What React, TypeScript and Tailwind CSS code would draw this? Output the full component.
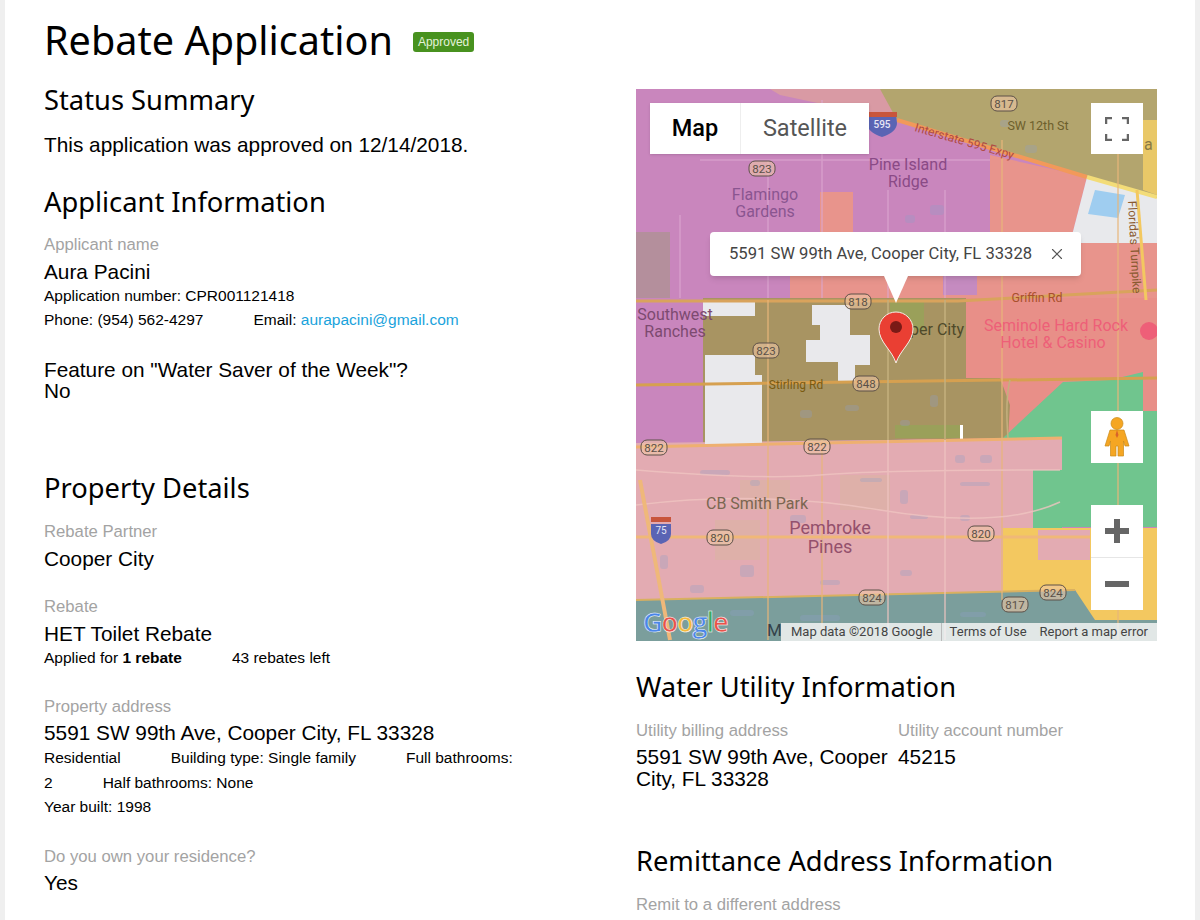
import type { ReactNode } from 'react';
import { X } from 'lucide-react';

const shields: [number, number, string][] = [
  [1004, 103, '817'],
  [762, 168, '823'],
  [858, 301, '818'],
  [766, 350, '823'],
  [866, 383, '848'],
  [654, 447, '822'],
  [817, 446, '822'],
  [720, 537, '820'],
  [981, 533, '820'],
  [872, 597, '824'],
  [1053, 592, '824'],
  [1015, 604, '817'],
];

const labels: [number, number, string, number, string][] = [
  [908, 170, 'Pine Island', 16, '#8a4a86'],
  [908, 187, 'Ridge', 16, '#8a4a86'],
  [765, 200, 'Flamingo', 16, '#8a5590'],
  [765, 217, 'Gardens', 16, '#8a5590'],
  [675, 320, 'Southwest', 16, '#7c4a70'],
  [675, 337, 'Ranches', 16, '#7c4a70'],
  [757, 509, 'CB Smith Park', 16, '#7a6650'],
  [830, 534, 'Pembroke', 18, '#94506c'],
  [830, 553, 'Pines', 18, '#94506c'],
  [1037, 302, 'Griffin Rd', 12.5, '#a8502c'],
  [1038, 130, 'SW 12th St', 12.5, '#6d5f2c'],
  [796, 389, 'Stirling Rd', 12, '#7a5a10'],
  [1056, 331, 'Seminole Hard Rock', 16, '#ee5f78'],
  [1053, 348, 'Hotel & Casino', 16, '#ee5f78'],
  [937, 335, 'per City', 16, '#4f4a2a'],
];

const ponds: [number, number, number, number][] = [
  [930, 205, 14, 10], [845, 270, 18, 6], [905, 215, 10, 8], [1000, 120, 10, 7], [1025, 145, 12, 8],
  [800, 410, 12, 8], [845, 405, 14, 6], [900, 420, 10, 6], [930, 395, 8, 12],
  [700, 470, 30, 5], [750, 480, 10, 6], [860, 478, 22, 4], [955, 455, 10, 8], [980, 455, 12, 8],
  [900, 490, 8, 14], [960, 482, 30, 4], [910, 515, 18, 4], [960, 515, 10, 6], [790, 515, 16, 8],
  [740, 565, 14, 12], [820, 580, 20, 5], [900, 570, 12, 6], [690, 585, 14, 8], [660, 555, 8, 14],
  [730, 610, 24, 6], [800, 615, 40, 6], [960, 612, 26, 5],
];

function MapArt() {
  return (
    <svg viewBox="636 89 521 552" className="block h-full w-full">
      <rect x="636" y="89" width="521" height="552" fill="#c986bd" />
      <path d="M770 89H900L897 120L780 95Z" fill="#d99aa4" />
      <path d="M880 89H1157V200L1087 177L897 120Z" fill="#b3a56e" />
      <path d="M990 155L1087 177L1070 243H1157V298H790V232H853V192H820V232H990Z" fill="#e8948c" />
      <path d="M1087 177L1157 198V243H1070Z" fill="#e8e9ec" />
      <path d="M1095 190L1125 195L1118 218L1088 214Z" fill="#9fcdf0" />
      <path d="M1143 120H1157V195L1143 190Z" fill="#e9c868" />
      <rect x="943" y="275" width="34" height="20" fill="#c58bc0" />
      <rect x="636" y="232" width="34" height="66" fill="#b48f9c" />
      <rect x="958" y="298" width="199" height="142" fill="#e88f88" />
      <path d="M703 298H966V378H1000L1010 405L1008 438L703 443Z" fill="#a89462" />
      <path d="M895 425H960V438H895Z" fill="#9aa05a" />
      <rect x="890" y="300" width="34" height="30" fill="#9aa05a" />
      <path d="M1003 438L1063 382L1110 380L1143 372V411H1157V527H1033V470H1062V438Z" fill="#70c58e" />
      <path d="M636 443L1062 438V590L636 600Z" fill="#e3abb2" />
      <path d="M1033 470H1062V530H1033Z" fill="#70c58e" />
      <path d="M1003 528H1157V620H1090L1075 590L1003 593Z" fill="#f3c860" />
      <path d="M1038 530H1090V560H1038Z" fill="#e3abb2" />
      <path d="M636 600L1075 590L1095 620H1157V641H636Z" fill="#7b9e9c" />
      <path d="M740 480H790V510H740ZM840 475H890V510H840ZM715 520H760V560H715Z" fill="#d8b89a" opacity="0.4" />
      <path d="M705 355H755V375H762V445H705Z" fill="#e9e9ec" />
      <rect x="703" y="302" width="52" height="14" fill="#e9e9ec" />
      <path d="M812 305H850V335H870V365H855V382H838V362H806V340H820V325H812Z" fill="#e9e9ec" />
      <rect x="960" y="425" width="3" height="14" fill="#ffffff" />
      {ponds.map(([x, y, w, h]) => (
        <rect key={`${x}-${y}`} x={x} y={y} width={w} height={h} rx="3" fill="#8fa0c8" opacity="0.3" />
      ))}
      <path d="M897 120L1087 177" fill="none" stroke="#f2995a" strokeWidth="4" />
      <path d="M1087 177L1157 197" fill="none" stroke="#f3dc78" strokeWidth="4" />
      <path d="M636 301H958L1157 290" fill="none" stroke="#d9a35c" strokeWidth="3" />
      <path d="M636 385L1157 378" fill="none" stroke="#d6a050" strokeWidth="3" />
      <path d="M636 447L1062 438" fill="none" stroke="#eeb070" strokeWidth="3" />
      <path d="M636 537H1090" fill="none" stroke="#f0b878" strokeWidth="3" />
      <path d="M636 600L1075 590" fill="none" stroke="#d9b060" strokeWidth="2" />
      <path d="M768 300V640M1002 140V600M822 440V640M1118 140V640" fill="none" stroke="#e7b679" strokeWidth="2" opacity="0.6" />
      <path d="M768 160V298M822 100V298M888 190V298M945 190V298M700 160H990M680 215V298" fill="none" stroke="#dba6cf" strokeWidth="1.5" opacity="0.7" />
      <path d="M888 300V440M945 300V440M1010 380Q1005 400 1008 438" fill="none" stroke="#c4b07e" strokeWidth="1.5" />
      <path d="M888 440V640M945 440V640M636 470Q760 480 820 475T1060 470M636 505Q760 490 880 510T1060 502" fill="none" stroke="#efc4c0" strokeWidth="1.5" opacity="0.8" />
      <path d="M640 480L670 640" fill="none" stroke="#efb87a" strokeWidth="4" />
      <path d="M1137 190L1146 300" fill="none" stroke="#f3c860" strokeWidth="3" />
      <path d="M867 123Q868 115 870 115H896L897 123Q897 132 882 137Q867 132 867 123Z" fill="#5a64b4" />
      <rect x="868" y="112" width="29" height="5" fill="#c8553c" />
      <text x="882" y="128" textAnchor="middle" fontSize="10" fontWeight="500" fill="#e6e6f5" fontFamily="Roboto, sans-serif">595</text>
      <path d="M651 524H671V534Q671 541 661 544Q651 541 651 534Z" fill="#5a64b4" />
      <rect x="651" y="517" width="20" height="5" fill="#c8553c" />
      <text x="661" y="534" textAnchor="middle" fontSize="10" fill="#e6e6f5" fontFamily="Roboto, sans-serif">75</text>
      {shields.map(([x, y, t]) => (
        <g key={`${x}-${y}`}>
          <rect x={x - 13} y={y - 7} width="26" height="15" rx="6" fill="#efc7a5" fillOpacity="0.6" stroke="#5c5048" strokeWidth="1" />
          <text x={x} y={y + 4.5} textAnchor="middle" fontSize="11.5" fill="#5a5048" fontFamily="Roboto, sans-serif">{t}</text>
        </g>
      ))}
      {labels.map(([x, y, t, s, c]) => (
        <text key={t} x={x} y={y} textAnchor="middle" fontSize={s} fill={c} fontFamily="Roboto, sans-serif">{t}</text>
      ))}
      <text transform="translate(914 131) rotate(16)" fontSize="12" fill="#b04a44" fontFamily="Roboto, sans-serif">Interstate 595 Expy</text>
      <text transform="translate(1128 201) rotate(87)" fontSize="12" fill="#8a5a30" fontFamily="Roboto, sans-serif">Florida's Turnpike</text>
      <text x="1144" y="150" fontSize="16" fill="#8a7a44" fontFamily="Roboto, sans-serif">a</text>
      <circle cx="1149" cy="331" r="9" fill="#ee5f78" />
      <path d="M896 363C892 350 879 342 879 329A17 17 0 0 1 913 329C913 342 900 350 896 363Z" fill="#ea3f33" stroke="#f4f0e8" strokeWidth="1" />
      <circle cx="896" cy="327" r="6" fill="#7a1a16" />
      <text x="643" y="632" fontSize="27" fontWeight="600" fontFamily="'Open Sans', sans-serif" stroke="#ffffff" strokeWidth="0.5">
        <tspan fill="#4a86e8">G</tspan>
        <tspan fill="#e8524a" dx="-1">o</tspan>
        <tspan fill="#f4b93c" dx="-1">o</tspan>
        <tspan fill="#4a86e8" dx="-1">g</tspan>
        <tspan fill="#3fa85a" dx="-1">l</tspan>
        <tspan fill="#e8524a" dx="-1">e</tspan>
      </text>
      <text x="767" y="636" fontSize="17" fill="#33424a" fontFamily="Roboto, sans-serif">M</text>
    </svg>
  );
}

function Pegman() {
  return (
    <svg viewBox="0 0 26 40" className="h-[40px] w-[26px]">
      <circle cx="13" cy="6.5" r="6" fill="#f5a623" stroke="#c98a1a" strokeWidth="0.7" />
      <path d="M6 13H20L25 29H21L19.5 24V39H14V29H12V39H6.5V24L5 29H1Z" fill="#f5a623" stroke="#c98a1a" strokeWidth="0.7" />
      <path d="M13 13L11.5 18L13 21L14.5 18Z" fill="#d8642a" />
    </svg>
  );
}

function GoogleMap() {
  return (
    <div className="relative h-[552px] w-[521px] overflow-hidden font-['Roboto',sans-serif]">
      <MapArt />

      <div className="absolute left-[14px] top-[14px] flex h-[51px] bg-white text-[23.5px] shadow-sm">
        <div className="flex w-[91px] items-center justify-center border-r border-[#eeeeee] font-medium text-black">Map</div>
        <div className="flex w-[128px] items-center justify-center text-[#565656]">Satellite</div>
      </div>

      <div className="absolute right-[14px] top-[14px] flex h-[51px] w-[52px] items-center justify-center bg-white">
        <svg viewBox="0 0 24 24" className="h-[24px] w-[24px]" fill="none" stroke="#666666" strokeWidth="2.5">
          <path d="M1 7V1H7M17 1H23V7M23 17V23H17M7 23H1V17" />
        </svg>
      </div>

      <div className="absolute left-[74px] top-[143px] flex h-[44px] w-[371px] items-center justify-between rounded-sm bg-white pl-[19px] pr-[15px] text-[16.6px] text-[#444444] shadow-md">
        <span>5591 SW 99th Ave, Cooper City, FL 33328</span>
        <X size={18} strokeWidth={1.5} className="text-[#555555]" />
      </div>
      <div className="absolute left-[248px] top-[187px] h-0 w-0 border-x-[12px] border-t-[27px] border-x-transparent border-t-white" />

      <div className="absolute right-[14px] top-[322px] flex h-[52px] w-[52px] items-center justify-center bg-white">
        <Pegman />
      </div>

      <div className="absolute right-[14px] top-[416px] flex h-[105px] w-[52px] flex-col bg-white">
        <div className="flex flex-1 items-center justify-center border-b border-[#e6e6e6]">
          <svg viewBox="0 0 24 24" className="h-[24px] w-[24px]" fill="#666666">
            <path d="M9 0H15V9H24V15H15V24H9V15H0V9H9Z" />
          </svg>
        </div>
        <div className="flex flex-1 items-center justify-center">
          <div className="h-[6px] w-[24px] bg-[#666666]" />
        </div>
      </div>

      <div className="absolute bottom-0 right-0 flex h-[18px] w-[376px] items-center bg-[#f3f3f3]/85 pl-[10px] pr-[9px] text-[13px] text-[#444444]">
        <span>Map data ©2018 Google</span>
        <span className="ml-[8px] h-full border-l border-[#bbbbbb]" />
        <span className="ml-[8px]">Terms of Use</span>
        <span className="ml-auto">Report a map error</span>
      </div>
    </div>
  );
}

function SectionTitle({ children, className }: { children: ReactNode; className: string }) {
  return <h2 className={`font-['Noto_Sans',sans-serif] text-[27.3px] leading-[38px] text-black ${className}`}>{children}</h2>;
}

function Label({ children, className = '' }: { children: ReactNode; className?: string }) {
  return <div className={`text-[16.7px] leading-[20px] text-[#a3a3a3] ${className}`}>{children}</div>;
}

function Value({ children, className = '' }: { children: ReactNode; className?: string }) {
  return <div className={`text-[20.8px] leading-[22px] text-black ${className}`}>{children}</div>;
}

function Small({ children }: { children: ReactNode }) {
  return <div className="whitespace-nowrap text-[15.5px] leading-[24.4px] text-black">{children}</div>;
}

export default function App() {
  return (
    <div className="h-[920px] overflow-hidden bg-[#efefef] px-[5px] font-['Liberation_Sans',Arial,sans-serif]">
      <div className="flex h-full bg-white pl-[39px]">
        <div className="w-[475px] shrink-0">
          <div className="flex items-center pt-[14px]">
            <h1 className="font-['Noto_Sans',sans-serif] text-[39.6px] leading-[52px] text-black">Rebate Application</h1>
            <span className="ml-[20px] mt-[4px] rounded-[3px] bg-[#48921f] px-[5px] text-[12px] leading-[20px] text-[#e4f2da]">Approved</span>
          </div>
          <SectionTitle className="mt-[15px]">Status Summary</SectionTitle>
          <p className="mt-[14px] text-[20.8px] leading-[24px] text-black">This application was approved on 12/14/2018.</p>

          <SectionTitle className="mt-[26px]">Applicant Information</SectionTitle>
          <Label className="mt-[14px]">Applicant name</Label>
          <Value className="mt-[6px]">Aura Pacini</Value>
          <div className="mt-[1px]">
            <Small>Application number: CPR001121418</Small>
            <Small>
              <span className="mr-[50px]">Phone: (954) 562-4297</span>
              Email: <a className="text-[#1aa3dc]">aurapacini@gmail.com</a>
            </Small>
          </div>
          <Value className="mt-[26px]">Feature on "Water Saver of the Week"?</Value>
          <Value className="-mt-px">No</Value>

          <SectionTitle className="mt-[67px]">Property Details</SectionTitle>
          <Label className="mt-[15px]">Rebate Partner</Label>
          <Value className="mt-[6px]">Cooper City</Value>

          <Label className="mt-[27px]">Rebate</Label>
          <Value className="mt-[6px]">HET Toilet Rebate</Value>
          <div className="mt-[1px]">
            <Small>
              <span className="mr-[50px]">Applied for <b>1 rebate</b></span>43 rebates left
            </Small>
          </div>

          <Label className="mt-[27px]">Property address</Label>
          <Value className="mt-[5px]">5591 SW 99th Ave, Cooper City, FL 33328</Value>
          <div className="mt-[2px]">
            <Small>
              <span className="mr-[50px]">Residential</span>
              <span className="mr-[50px]">Building type: Single family</span>
              Full bathrooms:
            </Small>
            <Small>
              <span className="mr-[50px]">2</span>
              Half bathrooms: None
            </Small>
            <Small>Year built: 1998</Small>
          </div>

          <Label className="mt-[28px]">Do you own your residence?</Label>
          <Value className="mt-[5px]">Yes</Value>
        </div>

        <div className="ml-[117px] w-[521px] shrink-0 pt-[89px]">
          <GoogleMap />
          <SectionTitle className="mt-[27px]">Water Utility Information</SectionTitle>
          <div className="mt-[15px] grid grid-cols-[262px_1fr]">
            <div>
              <Label>Utility billing address</Label>
              <Value className="mt-[5px]">5591 SW 99th Ave, Cooper City, FL 33328</Value>
            </div>
            <div>
              <Label>Utility account number</Label>
              <Value className="mt-[5px]">45215</Value>
            </div>
          </div>
          <SectionTitle className="mt-[52px]">Remittance Address Information</SectionTitle>
          <Label className="mt-[15px]">Remit to a different address</Label>
        </div>
      </div>
    </div>
  );
}
